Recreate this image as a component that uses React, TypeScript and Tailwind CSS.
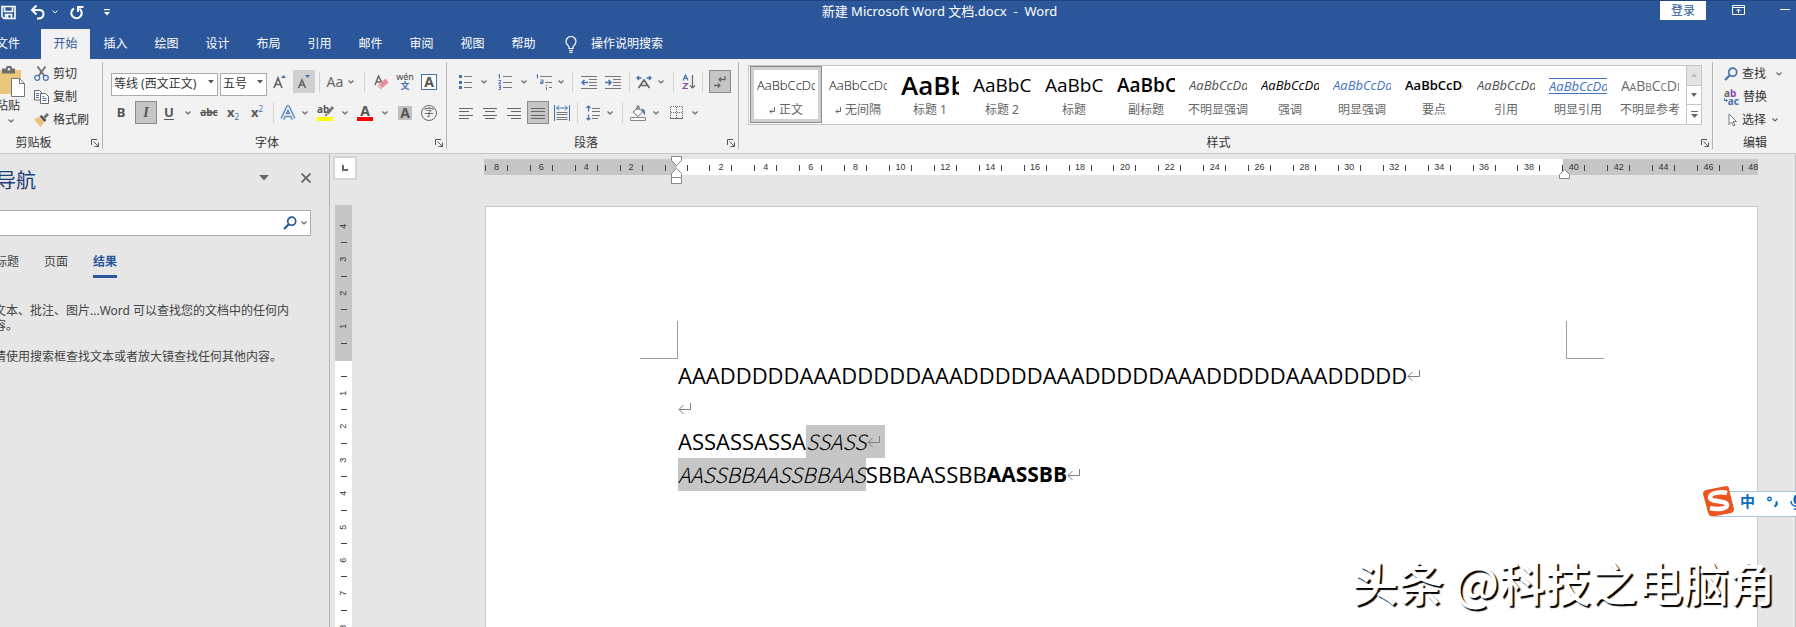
import React from "react";

const tabs = ["插入", "绘图", "设计", "布局", "引用", "邮件", "审阅", "视图", "帮助"];

const styleItems = [
  { name: "正文", mark: true, cls: "text-[13px] font-light text-black", selected: true },
  { name: "无间隔", mark: true, cls: "text-[13px] font-light text-black" },
  { name: "标题 1", cls: "text-[26px] font-semibold text-black" },
  { name: "标题 2", cls: "text-[19px] text-black" },
  { name: "标题", cls: "text-[19px] text-black" },
  { name: "副标题", cls: "text-[19px] font-semibold text-black" },
  { name: "不明显强调", cls: "text-[13px] italic text-[#505050]" },
  { name: "强调", cls: "text-[13px] italic text-black" },
  { name: "明显强调", cls: "text-[13px] italic text-[#4472c4]" },
  { name: "要点", cls: "text-[13px] font-semibold text-black" },
  { name: "引用", cls: "text-[13px] italic text-[#505050]" },
  { name: "明显引用", cls: "text-[13px] italic text-[#4472c4] border-y border-[#4472c4] leading-[14px]" },
  { name: "不明显参考", cls: "text-[14px] text-[#6a6a6a] [font-variant-caps:small-caps]" },
];

const rulerNumbers = [
  "8", "6", "4", "2", "", "2", "4", "6", "8", "10", "12", "14", "16", "18", "20",
  "22", "24", "26", "28", "30", "32", "34", "36", "38", "40", "42", "44", "46", "48",
];
const verticalNumbers = ["4", "3", "2", "1", "", "1", "2", "3", "4", "5", "6", "7", "8"];

function Tile({ label, w, active, children }: { label: string; w: string; active?: boolean; children: React.ReactNode }) {
  return (
    <button
      type="button"
      aria-label={label}
      className={`${w} flex h-[23px] shrink-0 items-center justify-center ${active ? "border border-[#8a8a8a] bg-[#c5c5c5]" : ""}`}
    >
      {children}
    </button>
  );
}

function Chevron() {
  return (
    <svg className="shrink-0" width="6" height="4" viewBox="0 0 6 4" fill="none" stroke="#666" strokeWidth="1.2">
      <path d="M0.5 0.5 3 3 5.5 0.5" />
    </svg>
  );
}

function Drop({ w, label = "更多选项" }: { w: string; label?: string }) {
  return (
    <Tile w={w} label={label}>
      <Chevron />
    </Tile>
  );
}

function Sep({ w }: { w: string }) {
  return (
    <span className={`${w} flex h-5 shrink-0 justify-center`}>
      <span className="w-px bg-[#d0d0d0]" />
    </span>
  );
}

function Launcher({ label }: { label: string }) {
  return (
    <button type="button" aria-label={label} className="shrink-0">
      <svg width="8" height="8" viewBox="0 0 8 8" fill="none" stroke="#555" strokeWidth="1">
        <path d="M0.5 6V0.5H6M2.5 2.5l4.5 4.5M7.5 3.5v4h-4" />
      </svg>
    </button>
  );
}

function GroupLabel({ text, pad = "" }: { text: string; pad?: string }) {
  return (
    <div className="flex h-[22px] items-center pt-0.5 pr-[3px] text-xs text-[#333]">
      <span className={`flex-1 text-center ${pad}`}>{text}</span>
      <Launcher label={`${text}设置`} />
    </div>
  );
}

function Lines({ rows }: { rows: number[][] }) {
  return (
    <svg className="shrink-0" width="16" height="16" viewBox="0 0 16 16" stroke="#666" strokeWidth="1" shapeRendering="crispEdges">
      {rows.map(([y, a, b]) => (
        <path key={y} d={`M${a} ${y}.5H${b}`} />
      ))}
    </svg>
  );
}

function Magnifier({ color }: { color: string }) {
  return (
    <svg width="14" height="14" viewBox="0 0 14 14" fill="none" stroke={color}>
      <circle cx="8.7" cy="5.2" r="4" strokeWidth="1.7" />
      <path d="M5.8 8.2 1 13" strokeWidth="2.2" />
    </svg>
  );
}

function Combo({ value, w, label }: { value: string; w: string; label: string }) {
  return (
    <label className={`${w} relative h-[23px] shrink-0`}>
      <select
        aria-label={label}
        className="h-full w-full appearance-none border border-[#ababab] bg-white pl-0.5 text-xs text-[#333]"
      >
        <option>{value}</option>
      </select>
      <svg className="pointer-events-none absolute top-2.5 right-1" width="6" height="4" viewBox="0 0 6 4">
        <path d="M0 0h6L3 3.5z" fill="#555" />
      </svg>
    </label>
  );
}

function ReturnMark() {
  return (
    <svg className="inline-block shrink-0" width="14" height="12" viewBox="0 0 14 12" fill="none" stroke="#808080" strokeWidth="1">
      <path d="M12.5 0v6.5H1M5.5 2 1 6.500l4.500 4.500" />
    </svg>
  );
}

function TitleBar() {
  return (
    <header className="flex h-[29px] items-start border-t border-[#1f4580] pl-px text-white">
      <div className="mr-[82px] flex h-[22px] flex-1 items-center">
        <button type="button" aria-label="保存">
          <svg width="15" height="15" viewBox="0 0 15 15" fill="none" stroke="#fff" strokeWidth="1.6">
            <path d="M1 1.5h13v12H3L1 11.5zM3.5 1.5v5h8v-5M4.5 13.5v-4h6v4M6.5 10v3" />
          </svg>
        </button>
        <button type="button" aria-label="撤消" className="ml-3.5">
          <svg width="16" height="15" viewBox="0 0 16 15" fill="none" stroke="#fff" strokeWidth="2">
            <path d="M2 5h7c6 0 6 8 0 8.5H7M6.5 0.5 2 5l4.5 4.5" />
          </svg>
        </button>
        <button type="button" aria-label="撤消列表" className="ml-1.5">
          <svg width="6" height="4" viewBox="0 0 6 4" fill="none" stroke="#fff"><path d="M0.5 0.5 3 3 5.5 0.5" /></svg>
        </button>
        <button type="button" aria-label="重复" className="ml-3">
          <svg width="14" height="15" viewBox="0 0 14 15" fill="none" stroke="#fff" strokeWidth="2">
            <path d="M4 3.5a5.2 5.2 0 1 0 5.5 0.3M8 7V2h5.5" />
          </svg>
        </button>
        <button type="button" aria-label="自定义快速访问工具栏" className="ml-5">
          <svg width="6" height="7" viewBox="0 0 6 7" fill="#fff"><path d="M0 0h6v1.2H0zM0 3h6L3 6.5z" /></svg>
        </button>
      </div>
      <h1 className="flex h-[22px] items-center text-[13px] whitespace-pre">新建 Microsoft Word 文档.docx  -  Word</h1>
      <div className="flex flex-1 items-start justify-end">
        <button type="button" className="flex h-[19px] w-[46px] items-center justify-center bg-white text-xs text-[#2b579a]">登录</button>
        <button type="button" aria-label="功能区显示选项" className="mt-1 ml-[26px]">
          <svg width="13" height="10" viewBox="0 0 13 10" fill="none" stroke="#fff">
            <path d="M0.5 0.5h12v9H0.5zM0.5 2.5h12M6.5 8V4M4.5 6l2-2 2 2" />
          </svg>
        </button>
        <button type="button" aria-label="最小化" className="mt-2 mr-1.5 ml-[35px] h-px w-2.5 bg-white" />
      </div>
    </header>
  );
}

function TabRow() {
  return (
    <nav className="flex h-[30px] items-stretch text-xs text-white">
      <a href="#file" className="-ml-1 flex w-[45px] items-center">文件</a>
      <a href="#home" className="flex w-[49px] items-center justify-center bg-[#f2f2f2] text-[#2b579a]">开始</a>
      {tabs.map((t) => (
        <a key={t} href={`#${t}`} className="flex w-[51px] items-center justify-center">{t}</a>
      ))}
      <button type="button" className="ml-4 flex items-center gap-3.5">
        <svg width="12" height="17" viewBox="0 0 12 17" fill="none" stroke="#fff" strokeWidth="1.2">
          <path d="M4 12.5V11C3.500 9.500 1 8.500 1 5.500a5 5 0 0 1 10 0C11 8.500 8.500 9.500 8 11v1.500zM4 14.500h4M4.500 16.300h3" />
        </svg>
        <span>操作说明搜索</span>
      </button>
    </nav>
  );
}

function ClipboardGroup() {
  return (
    <section aria-label="剪贴板" className="flex w-[102px] shrink-0 flex-col justify-between">
      <div className="flex h-[72px] pt-[3px]">
        <button type="button" className="-ml-1 flex w-[34px] flex-col items-start pt-1 text-xs text-[#333]">
          <svg width="30" height="31" viewBox="0 0 30 31">
            <path d="M0 4h25v24H0z" fill="#ebc67d" />
            <path d="M6 2.500h4a3 3 0 0 1 6 0h3v5H6z" fill="#6d6d6d" />
            <circle cx="13" cy="3.200" r="1.200" fill="#f2f2f2" />
            <path d="M15.500 12.500h8l5 5v13h-13z" fill="#fff" stroke="#777" />
            <path d="M23.500 12.500v5h5" fill="none" stroke="#777" />
          </svg>
          <span className="leading-[18px] whitespace-nowrap">粘贴</span>
          <span className="ml-3 flex h-3 items-center"><Chevron /></span>
        </button>
        <div className="ml-1 flex flex-col text-xs text-[#333]">
          <button type="button" className="flex h-[23px] items-center gap-1">
            <svg width="15" height="15" viewBox="0 0 15 15" fill="none">
              <path d="M3.500 0.500 10.500 10M11.500 0.500 4.500 10" stroke="#6d6d6d" strokeWidth="1.800" />
              <circle cx="3.200" cy="11.800" r="2.500" stroke="#4472b0" strokeWidth="1.200" />
              <circle cx="11.800" cy="11.800" r="2.500" stroke="#4472b0" strokeWidth="1.200" />
            </svg>
            剪切
          </button>
          <button type="button" className="flex h-[23px] items-center gap-1">
            <svg width="15" height="14" viewBox="0 0 15 14" fill="#fff" stroke="#666">
              <path d="M0.5 0.5h5l2.500 2.500v7H0.500z" />
              <path d="M2 3.500h3M2 5.500h3M2 7.500h3" stroke="#4472b0" />
              <path d="M6.500 3.500h5l3 3v7h-8z" />
              <path d="M8.500 6.500h2M8.500 8.500h4M8.500 10.500h4" stroke="#4472b0" />
            </svg>
            复制
          </button>
          <button type="button" className="flex h-[23px] items-center gap-1 whitespace-nowrap">
            <svg width="15" height="14" viewBox="0 0 15 14">
              <path d="M0 6.500 5 4l5 5-3.500 5z" fill="#ebc07a" />
              <path d="M5.500 3.500 7.500 2l5 5-2 2z" fill="#555" />
              <path d="M9.500 3.500 13 0l2 2-3.500 3.500z" fill="#6d6d6d" />
            </svg>
            格式刷
          </button>
        </div>
      </div>
      <GroupLabel text="剪贴板" pad="pr-6" />
    </section>
  );
}

function Divider() {
  return <span className="mt-[3px] mb-1 w-px shrink-0 bg-[#b5b5b5]" />;
}

function FontGroup() {
  return (
    <section aria-label="字体" className="flex w-[343px] shrink-0 flex-col justify-between pt-[7px]">
      <div>
        <div className="flex h-[31px] items-center pl-2">
          <Combo value="等线 (西文正文)" w="w-[107px]" label="字体" />
          <span className="w-0.5" />
          <Combo value="五号" w="w-[47px]" label="字号" />
          <Tile label="增大字号" w="w-[26px]">
            <svg width="14" height="16" viewBox="0 0 14 16" fill="none">
              <path d="M1 14 5 4l4 10M2.500 10.500h5" stroke="#666" strokeWidth="1.700" />
              <path d="M8 4h5L10.500 1z" fill="#4472b0" />
            </svg>
          </Tile>
          <button type="button" aria-label="减小字号" className="flex h-[23px] w-[22px] items-center justify-center bg-[#cfcfcf]">
            <svg width="14" height="16" viewBox="0 0 14 16" fill="none">
              <path d="M1.500 14 5 6l3.500 8M3 11h4" stroke="#666" strokeWidth="1.700" />
              <path d="M8 1h5L10.500 4z" fill="#4472b0" />
            </svg>
          </button>
          <Sep w="w-[9px]" />
          <Tile label="更改大小写" w="w-[22px]"><span className="text-sm text-[#666]">Aa</span></Tile>
          <Drop w="w-[10px]" />
          <Sep w="w-[17px]" />
          <Tile label="清除所有格式" w="w-[16px]">
            <svg width="15" height="16" viewBox="0 0 15 16" fill="none">
              <path d="M1 11 4.500 2 8 9M2.500 8h4" stroke="#666" strokeWidth="1.500" />
              <path d="m3.500 11.500 8-7 3 4-8 7z" fill="#e58b9b" />
              <path d="m3.500 11.500 2-1.800 3 4-2 1.800z" fill="#f2b8c2" />
            </svg>
          </Tile>
          <Tile label="拼音指南" w="w-[32px]">
            <span className="flex flex-col items-center">
              <span className="text-[9px] leading-[9px] text-[#444]">wén</span>
              <span className="text-[9px] leading-[10px] font-bold text-[#4472b0]">文</span>
            </span>
          </Tile>
          <Tile label="字符边框" w="w-[16px]">
            <span className="flex h-4 w-4 items-center justify-center border border-[#4472b0] bg-white text-sm leading-none font-bold text-[#555]">A</span>
          </Tile>
        </div>
        <div className="flex h-[31px] items-center pl-1.5 text-[13px] text-[#555]">
          <Tile label="加粗" w="w-[24px]"><b>B</b></Tile>
          <span className="w-0.5" />
          <Tile label="倾斜" w="w-[22px]" active><span className="font-['Liberation_Serif',serif] text-sm font-bold italic">I</span></Tile>
          <Tile label="下划线" w="w-[24px]"><b className="border-b border-[#555] leading-[13px]">U</b></Tile>
          <Drop w="w-[14px]" />
          <Tile label="删除线" w="w-[28px]"><span className="text-[10px] font-bold line-through">abc</span></Tile>
          <Tile label="下标" w="w-[20px]"><b>x</b><span className="mt-2 text-[8px] text-[#4472b0]">2</span></Tile>
          <Tile label="上标" w="w-[28px]"><b>x</b><span className="mb-2 text-[8px] text-[#4472b0]">2</span></Tile>
          <Sep w="w-[4px]" />
          <Tile label="文本效果" w="w-[26px]">
            <svg width="16" height="16" viewBox="0 0 16 16" fill="none" strokeLinejoin="round">
              <path d="M2.500 14 8 2l5.500 12M4.500 10h7" stroke="#b9d3f0" strokeWidth="5" />
              <path d="M2.500 14 8 2l5.500 12M4.500 10h7" stroke="#4472b0" strokeWidth="3.500" />
              <path d="M2.500 14 8 2l5.500 12M4.500 10h7" stroke="#fff" strokeWidth="1.500" />
            </svg>
          </Tile>
          <Drop w="w-[8px]" />
          <Tile label="文本突出显示颜色" w="w-[32px]">
            <span className="relative flex h-4 w-4 flex-col justify-between">
              <span className="text-left text-[10px] leading-[9px] font-bold">ab</span>
              <span className="h-1 bg-[#ffff00]" />
              <svg className="absolute top-0 left-1" width="13" height="12" viewBox="0 0 13 12"><path d="M11 1 5.500 7.500l2 2L13 3zM5 8l2 2-3.500 1.500z" fill="#777" /></svg>
            </span>
          </Tile>
          <Drop w="w-[8px]" />
          <Tile label="字体颜色" w="w-[32px]">
            <span className="flex h-4 w-4 flex-col items-center justify-between">
              <b className="text-sm leading-[11px]">A</b>
              <span className="h-1 w-4 shrink-0 bg-[#ff0000]" />
            </span>
          </Tile>
          <Drop w="w-[8px]" />
          <Tile label="字符底纹" w="w-[32px]"><b className="flex h-3.5 w-3.5 items-center justify-center bg-[#c0c0c0] text-sm">A</b></Tile>
          <Tile label="带圈字符" w="w-[16px]">
            <span className="flex h-4 w-4 shrink-0 items-center justify-center rounded-full border border-[#666] text-[10px]">字</span>
          </Tile>
        </div>
      </div>
      <GroupLabel text="字体" pad="pr-1" />
    </section>
  );
}

function ParagraphGroup() {
  return (
    <section aria-label="段落" className="flex w-[291px] shrink-0 flex-col justify-between pt-[7px]">
      <div>
        <div className="flex h-[31px] items-center pl-2.5">
          <Tile label="项目符号" w="w-[17px]">
            <svg width="14" height="16" viewBox="0 0 14 16">
              <path d="M0 1h3v3H0zM0 7h3v3H0zM0 12h3v3H0z" fill="#4472b0" />
              <path d="M5 2.500h8M5 8.500h8M5 13.500h8" stroke="#777" />
            </svg>
          </Tile>
          <Drop w="w-[20px]" />
          <Tile label="编号" w="w-[22px]">
            <svg width="14" height="16" viewBox="0 0 14 16" fill="none">
              <path d="M0.500 1.500 1.500 0.500v4M0.500 6.500h2v1.500l-2 1.500h2.500M0.500 11.500h2v4h-2M1 13.500h1.500" stroke="#4472b0" />
              <path d="M5 2.500h9M5 8.500h9M5 13.500h9" stroke="#777" />
            </svg>
          </Tile>
          <Drop w="w-[15px]" />
          <Tile label="多级列表" w="w-[26px]">
            <svg width="16" height="16" viewBox="0 0 16 16" fill="none">
              <path d="M0.500 1.500 1.500 0.500v4M4.500 6h2.500v3.500H4.500V8H7M10.500 11v1M10.500 13v3" stroke="#4472b0" />
              <path d="M4 2.500h12M9 8.500h7M13 13.500h3" stroke="#777" />
            </svg>
          </Tile>
          <Drop w="w-[7px]" />
          <Sep w="w-[17px]" />
          <Tile label="减少缩进量" w="w-[16px]">
            <svg width="16" height="14" viewBox="0 0 16 14" fill="none">
              <path d="M0 1.500h16M8 4.500h8M8 7.500h8M8 10.500h8M0 13.500h16" stroke="#777" />
              <path d="M7 7.500H1M3.500 5 1 7.500 3.500 10" stroke="#4472b0" strokeWidth="1.500" />
            </svg>
          </Tile>
          <Tile label="增加缩进量" w="w-[32px]">
            <svg width="16" height="14" viewBox="0 0 16 14" fill="none">
              <path d="M0 1.500h16M8 4.500h8M8 7.500h8M8 10.500h8M0 13.500h16" stroke="#777" />
              <path d="M0 7.500h6M3.500 5 6 7.500 3.500 10" stroke="#4472b0" strokeWidth="1.500" />
            </svg>
          </Tile>
          <Sep w="w-[1px]" />
          <Tile label="中文版式" w="w-[28px]">
            <svg width="16" height="14" viewBox="0 0 16 14" fill="none">
              <path d="M2.500 13 8 5l5.500 8M5 10.500h6" stroke="#666" strokeWidth="1.700" />
              <path d="M5.500 3H1M3 1 1 3l2 2M10.500 3H15M13 1l2 2-2 2" stroke="#4472b0" strokeWidth="1.300" />
            </svg>
          </Tile>
          <Drop w="w-[6px]" />
          <Sep w="w-[18px]" />
          <Tile label="排序" w="w-[14px]">
            <svg width="14" height="16" viewBox="0 0 14 16" fill="none">
              <path d="M1 6.500 3.500 1 6 6.500M2 4.500h3" stroke="#4472b0" strokeWidth="1.200" />
              <path d="M1 9.500h4.500L1 14.500h5" stroke="#8a4fb0" strokeWidth="1.200" />
              <path d="M10.500 1v13M8 11.500l2.500 2.500 2.500-2.500" stroke="#666" strokeWidth="1.200" />
            </svg>
          </Tile>
          <Sep w="w-[13px]" />
          <Tile label="显示编辑标记" w="w-[22px]" active>
            <svg width="12" height="14" viewBox="0 0 12 14" fill="none" stroke="#666" strokeWidth="1.300">
              <path d="M11 1v3.500H5M7 2.500l-2 2 2 2M0 10.500h6M4 8.500l2 2-2 2" />
            </svg>
          </Tile>
        </div>
        <div className="flex h-[31px] items-center pl-2">
          <Tile label="左对齐" w="w-[24px]"><Lines rows={[[3, 0, 14], [6, 0, 10], [10, 0, 14], [13, 0, 10]]} /></Tile>
          <Tile label="居中" w="w-[24px]"><Lines rows={[[3, 0, 14], [6, 2, 12], [10, 0, 14], [13, 2, 12]]} /></Tile>
          <Tile label="右对齐" w="w-[24px]"><Lines rows={[[3, 0, 14], [6, 4, 14], [10, 0, 14], [13, 4, 14]]} /></Tile>
          <Tile label="两端对齐" w="w-[22px]" active><Lines rows={[[3, 1, 15], [6, 1, 15], [10, 1, 15], [13, 1, 15]]} /></Tile>
          <Tile label="分散对齐" w="w-[26px]">
            <svg width="16" height="16" viewBox="0 0 16 16" fill="none">
              <path d="M0.500 0v16M15.500 0v16M2.500 3h11M5 0.500 2.500 3 5 5.500M11 0.500 13.500 3 11 5.500" stroke="#4472b0" />
              <path d="M2.500 7.500h11M2.500 9.500h11M2.500 12.500h11M2.500 14.500h11" stroke="#777" />
            </svg>
          </Tile>
          <Sep w="w-[5px]" />
          <Tile label="行距" w="w-[26px]">
            <svg width="14" height="16" viewBox="0 0 14 16" fill="none">
              <path d="M2.500 1v5.500M0.500 3l2-2 2 2M2.500 9.500V15M0.500 13l2 2 2-2" stroke="#4472b0" strokeWidth="1.200" />
              <path d="M6 3.500h8M6 6.500h8M6 10.500h8M6 13.500h6" stroke="#777" />
            </svg>
          </Tile>
          <Drop w="w-[8px]" />
          <Sep w="w-[16px]" />
          <Tile label="底纹" w="w-[17px]">
            <svg width="17" height="16" viewBox="0 0 17 16" fill="none">
              <path d="m3 7 5-4.500L12.500 7 8 11.500zM7 5V1h2v4" stroke="#666" fill="#fff" />
              <path d="M11 3.500c4 0 5 4 3.500 7-1-1.500-1-3.500-2-4z" fill="#4472b0" />
              <path d="M0.500 12.500h15v3H0.500z" stroke="#888" fill="#fff" />
            </svg>
          </Tile>
          <Drop w="w-[18px]" />
          <Tile label="边框" w="w-[22px]">
            <svg width="13" height="13" viewBox="0 0 13 13" fill="none" stroke="#666" shapeRendering="crispEdges">
              <path d="M0.500 0.500v12M12.500 0.500v12M0.500 0.500h12M6.500 0.500v12M0.500 6.500h12" strokeDasharray="1 1" />
              <path d="M0 12.500h13" />
            </svg>
          </Tile>
          <Drop w="w-[16px]" />
        </div>
      </div>
      <GroupLabel text="段落" pad="pr-0.5" />
    </section>
  );
}

function StylesGroup() {
  return (
    <section aria-label="样式" className="flex min-w-0 flex-1 flex-col justify-between pt-1.5 pl-[9px]">
      <div className="mr-2.5 flex h-[60px] border border-[#c6c6c6] bg-white">
        <div className="flex min-w-0 flex-1 overflow-hidden pl-px">
          {styleItems.map((s) => (
            <button
              key={s.name}
              type="button"
              className={`flex h-[57px] w-[72px] shrink-0 flex-col items-center ${s.selected ? "border border-[#8a8a8a] shadow-[inset_0_0_0_3px_#d0d0d0]" : "border border-transparent"}`}
            >
              <span className="flex h-[37px] w-[58px] items-center overflow-hidden font-['Open_Sans',sans-serif]">
                <span className={`${s.cls} w-[58px] overflow-hidden text-left`}>AaBbCcDd</span>
              </span>
              <span className="flex items-center gap-1 text-xs leading-none whitespace-nowrap text-[#666]">
                {s.mark && (
                  <svg width="6" height="7" viewBox="0 0 6 7" fill="none" stroke="#666"><path d="M5.500 0v4.500H1M3 2.500l-2 2 2 2" /></svg>
                )}
                {s.name}
              </span>
            </button>
          ))}
        </div>
        <div className="flex w-[15px] shrink-0 flex-col border-l border-[#c6c6c6]">
          <button type="button" aria-label="上一行" className="flex flex-1 items-center justify-center bg-[#e3e3e3]">
            <svg width="6" height="4" viewBox="0 0 6 4"><path d="M0 4h6L3 0z" fill="#bbb" /></svg>
          </button>
          <button type="button" aria-label="下一行" className="flex flex-1 items-center justify-center border-y border-[#c6c6c6]">
            <svg width="6" height="4" viewBox="0 0 6 4"><path d="M0 0h6L3 4z" fill="#666" /></svg>
          </button>
          <button type="button" aria-label="其他样式" className="flex flex-1 items-center justify-center">
            <svg width="7" height="7" viewBox="0 0 7 7"><path d="M0 0h7v1H0zM0 3h7L3.500 7z" fill="#666" /></svg>
          </button>
        </div>
      </div>
      <GroupLabel text="样式" pad="pr-3" />
    </section>
  );
}

function EditingGroup() {
  return (
    <section aria-label="编辑" className="flex w-[83px] shrink-0 flex-col justify-between pl-[11px] text-xs text-[#333]">
      <div className="flex flex-col pt-[3px]">
        <button type="button" className="flex h-[23px] items-center">
          <Magnifier color="#4472b0" />
          <span className="ml-1">查找</span>
          <span className="ml-2.5"><Chevron /></span>
        </button>
        <button type="button" className="flex h-[23px] items-center">
          <span className="flex w-[15px] flex-col text-[10px] leading-[8px] font-bold">
            <span className="text-left text-[#666]">a<span className="text-[#8a4fb0]">b</span></span>
            <span className="flex items-center justify-end text-[#4472b0]">
              <svg width="4" height="5" viewBox="0 0 4 5" fill="none" stroke="#4472b0"><path d="M0.500 0v2.500h3M2 1l1.500 1.500L2 4" /></svg>
              ac
            </span>
          </span>
          <span className="ml-1">替换</span>
        </button>
        <button type="button" className="flex h-[23px] items-center">
          <svg className="ml-1" width="10" height="14" viewBox="0 0 10 14" fill="#fff" stroke="#777"><path d="M1 1v10.500l2.500-2.500 2 4 1.500-0.800-2-3.700h3.500z" /></svg>
          <span className="ml-1">选择</span>
          <span className="ml-1.5"><Chevron /></span>
        </button>
      </div>
      <div className="flex h-[22px] items-center pt-0.5 pl-[19px]">编辑</div>
    </section>
  );
}

function NavigationPane() {
  return (
    <aside className="flex w-[330px] shrink-0 flex-col overflow-hidden border-r border-[#b5b5b5] text-[#444]">
      <div className="mt-3 flex h-[30px] items-center">
        <h2 className="-ml-1 flex-1 text-xl text-[#1f3f77]">导航</h2>
        <button type="button" aria-label="任务窗格选项" className="mb-1.5">
          <svg width="10" height="6" viewBox="0 0 10 6"><path d="M0 0h10L5 5.500z" fill="#666" /></svg>
        </button>
        <button type="button" aria-label="关闭" className="mr-[18px] mb-1.5 ml-8">
          <svg width="10" height="10" viewBox="0 0 10 10" stroke="#666" strokeWidth="1.800"><path d="m0.500 0.500 9 9M9.500 0.500l-9 9" /></svg>
        </button>
      </div>
      <label className="mt-3.5 mr-[18px] flex h-[26px] items-center border border-l-0 border-[#ababab] bg-white pr-[3px]">
        <input aria-label="搜索文档" className="min-w-0 flex-1 self-stretch bg-transparent px-1 text-xs outline-none" />
        <Magnifier color="#2b579a" />
        <span className="ml-1"><Chevron /></span>
      </label>
      <div role="tablist" className="-ml-[5px] mt-[13px] flex gap-[25px] text-xs">
        <button type="button" role="tab" className="h-[29px] border-b-[3px] border-transparent">标题</button>
        <button type="button" role="tab" className="h-[29px] border-b-[3px] border-transparent">页面</button>
        <button type="button" role="tab" aria-selected="true" className="h-[29px] border-b-[3px] border-[#2b579a] font-bold text-[#2b579a]">结果</button>
      </div>
      <p className="-ml-[6px] mt-[25px] w-[300px] text-xs leading-[15px]">文本、批注、图片...Word 可以查找您的文档中的任何内容。</p>
      <p className="-ml-[6px] mt-4 text-xs leading-[15px] whitespace-nowrap">请使用搜索框查找文本或者放大镜查找任何其他内容。</p>
    </aside>
  );
}

function HorizontalRuler() {
  return (
    <div className="relative mt-[5px] mr-[37px] ml-[130px] flex h-4 font-['Liberation_Sans',sans-serif]">
      <span className="w-[193px] shrink-0 bg-[#c6c6c6]" />
      <span className="flex-1 bg-white" />
      <span className="w-[195px] shrink-0 bg-[#c6c6c6]" />
      <div className="absolute inset-y-0 -right-0.5 left-0 overflow-hidden">
        <div className="-mr-4 -ml-[10px] flex h-full items-center pt-0.5 text-[9px] text-[#333]">
          {rulerNumbers.map((n, i) => (
            <span key={i} className="flex flex-1 basis-0 items-center justify-center">
              <span className="h-1.5 w-px bg-[#444]" />
              <span className="w-[21px] text-center">{n}</span>
              <span className="h-1.5 w-px bg-[#444]" />
            </span>
          ))}
        </div>
      </div>
      <svg className="absolute -top-[3px] left-[187px]" width="11" height="28" viewBox="0 0 11 28" fill="#fff" stroke="#888">
        <path d="M0.500 0.500h10v4l-5 5-5-5zM0.500 21.500v-4l5-5 5 5v4zM0.500 21.500h10v6H0.500z" />
      </svg>
      <svg className="absolute top-2.5 right-[188px]" width="11" height="10" viewBox="0 0 11 10" fill="#fff" stroke="#888">
        <path d="M0.500 9.500v-4l5-5 5 5v4z" />
      </svg>
    </div>
  );
}

function VerticalRuler() {
  return (
    <div className="flex w-[27px] shrink-0 flex-col items-start overflow-hidden pl-1">
      <button type="button" aria-label="制表符" className="mt-[2px] -ml-px flex h-6 w-6 shrink-0 items-center justify-center border-2 border-[#d6d6d6] bg-white">
        <svg width="6" height="6" viewBox="0 0 6 6" fill="none" stroke="#666" strokeWidth="2"><path d="M1 0v5h5" /></svg>
      </button>
      <div className="mt-[25px] ml-px flex w-[17px] flex-1 flex-col font-['Liberation_Sans',sans-serif]">
        <div className="relative h-[156px] shrink-0 bg-[#c6c6c6]">
          <div className="absolute top-[5px] right-0 left-0 flex h-[434px] flex-col text-[9px] text-[#333]">
            {verticalNumbers.map((n, i) => (
              <span key={i} className="flex flex-1 basis-0 flex-col items-center">
                <span className="flex flex-1 -rotate-90 items-center leading-none">{n}</span>
                <span className="h-px w-1.5 bg-[#444]" />
              </span>
            ))}
          </div>
        </div>
        <div className="flex-1 bg-white" />
      </div>
    </div>
  );
}

function Page() {
  return (
    <article className="mt-[31px] mr-[37px] ml-[131px] flex-1 border border-b-0 border-[#c6c6c6] bg-white">
      <div className="flex justify-between pt-[114px] pr-[153px] pl-[154px]">
        <span className="h-[38px] w-[38px] border-r border-b border-[#a0a0a0]" />
        <span className="h-[38px] w-[38px] border-b border-l border-[#a0a0a0]" />
      </div>
      <div className="pl-[192px] font-['Open_Sans',sans-serif] text-[22px] leading-[33px] whitespace-nowrap text-black">
        <p className="flex items-center">AAADDDDDAAADDDDDAAADDDDDAAADDDDDAAADDDDDAAADDDDD<ReturnMark /></p>
        <p className="flex h-[33px] items-center"><ReturnMark /></p>
        <p className="flex items-center">
          ASSASSASSA
          <span className="flex items-center bg-[#c6c6c6] pr-1">
            <i className="font-['Noto_Sans_CJK_SC',sans-serif] text-[21px] font-light">SSASS</i>
            <ReturnMark />
          </span>
        </p>
        <p className="flex items-center">
          <i className="bg-[#c6c6c6] font-['Noto_Sans_CJK_SC',sans-serif] text-[21px] font-light">AASSBBAASSBBAAS</i>
          SBBAASSBB
          <span className="text-[21px] font-bold">AASSBB</span>
          <ReturnMark />
        </p>
      </div>
    </article>
  );
}

function InputMethodBar() {
  return (
    <div className="absolute top-[486px] right-0 flex h-[31px] w-[93px] items-center overflow-hidden text-[#0a6cc4]">
      <div className="absolute top-[5px] right-0 left-3 h-[26px] border-y border-[#a9c4dc] bg-white" />
      <svg className="relative shrink-0" width="31" height="31" viewBox="0 0 31 31">
        <path d="M0 8Q0 5 3 4L23 0q3 0 3 3l5 20q0 3-3 4L10 30.500q-4 0-5-4z" fill="#ea5520" />
        <path d="M24 7C17 5 7 7 7 11.500c0 5 17 2.500 17 7.500 0 4-10 5-17 3" fill="none" stroke="#fff" strokeWidth="4.500" />
      </svg>
      <span className="relative ml-1.5 text-[15px] font-bold">中</span>
      <svg className="relative ml-3 shrink-0" width="11" height="12" viewBox="0 0 11 12" fill="none" stroke="#0a6cc4">
        <circle cx="2.500" cy="3" r="1.700" strokeWidth="1.500" />
        <path d="M9 5.500c1.500 2 0.500 4-1.500 5" strokeWidth="2.200" />
      </svg>
      <svg className="relative ml-3 shrink-0" width="14" height="16" viewBox="0 0 14 16" fill="#0a6cc4" stroke="#0a6cc4">
        <rect x="4" y="1" width="6" height="9" rx="3" />
        <path d="M1 7c0 7 12 7 12 0M7 12v3M4 15h6" fill="none" strokeWidth="1.500" />
      </svg>
    </div>
  );
}

export default function App() {
  return (
    <div className="relative flex h-screen flex-col overflow-hidden bg-[#e6e6e6] font-['Noto_Sans','Noto_Sans_CJK_SC',sans-serif]">
      <div className="shrink-0 bg-[#2b579a]">
        <TitleBar />
        <TabRow />
      </div>
      <div className="flex h-[95px] shrink-0 border-b border-[#c8c8c8] bg-[#f2f2f2]">
        <ClipboardGroup />
        <Divider />
        <FontGroup />
        <Divider />
        <ParagraphGroup />
        <Divider />
        <StylesGroup />
        <Divider />
        <EditingGroup />
      </div>
      <div className="flex min-h-0 flex-1 border-r border-[#c0c0c0]">
        <NavigationPane />
        <VerticalRuler />
        <main className="-ml-[3px] flex min-w-0 flex-1 flex-col">
          <HorizontalRuler />
          <Page />
        </main>
      </div>
      <InputMethodBar />
      <div className="absolute right-[21px] bottom-[13px] font-['Noto_Sans_CJK_SC',sans-serif] text-[46px] leading-[66px] font-medium whitespace-nowrap text-white [text-shadow:2px_2px_1px_#000]">
        头条 @科技之电脑角
      </div>
    </div>
  );
}
